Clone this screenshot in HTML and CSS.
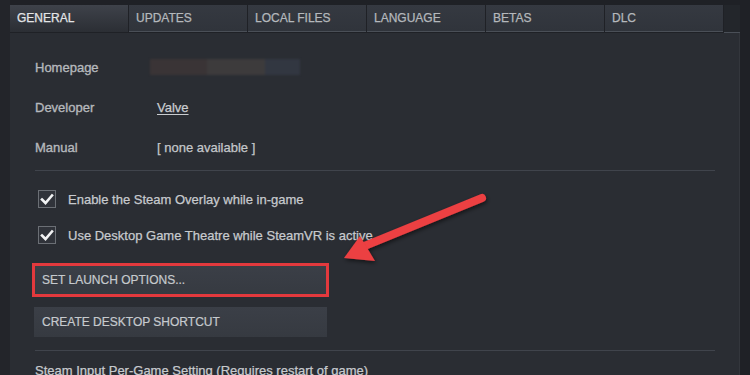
FILE: index.html
```html
<!DOCTYPE html>
<html>
<head>
<meta charset="utf-8">
<link rel="stylesheet" href="styles.css">
</head>
<body>
<div class="window">
  <div class="tabs">
    <div class="tab active">GENERAL</div>
    <div class="tab">UPDATES</div>
    <div class="tab">LOCAL FILES</div>
    <div class="tab">LANGUAGE</div>
    <div class="tab">BETAS</div>
    <div class="tab">DLC</div>
    <div class="tab-fill"></div>
  </div>
  <div class="panel">
    <div class="info">
      <div class="row"><span class="label">Homepage</span><span class="blur"><i class="b1"></i><i class="b2"></i><i class="b3"></i></span></div>
      <div class="row"><span class="label">Developer</span><span class="value link">Valve</span></div>
      <div class="row"><span class="label">Manual</span><span class="value">[ none available ]</span></div>
    </div>
    <div class="sep"></div>
    <div class="checks">
      <div class="check"><span class="box"><svg viewBox="0 0 18 18" width="18" height="18"><path d="M4 9.5 L7.5 13 L14 5.5" fill="none" stroke="#f2f3f4" stroke-width="2.6" stroke-linecap="square"/></svg></span><span class="ctext">Enable the Steam Overlay while in-game</span></div>
      <div class="check"><span class="box"><svg viewBox="0 0 18 18" width="18" height="18"><path d="M4 9.5 L7.5 13 L14 5.5" fill="none" stroke="#f2f3f4" stroke-width="2.6" stroke-linecap="square"/></svg></span><span class="ctext">Use Desktop Game Theatre while SteamVR is active</span></div>
    </div>
    <div class="buttons">
      <div class="btn highlighted">SET LAUNCH OPTIONS...</div>
      <div class="btn">CREATE DESKTOP SHORTCUT</div>
    </div>
    <div class="sep sep2"></div>
    <div class="footer-text">Steam Input Per-Game Setting (Requires restart of game)</div>
  </div>
  <svg class="arrow" width="750" height="375" viewBox="0 0 750 375">
    <defs>
      <filter id="sh" x="-20%" y="-20%" width="140%" height="140%">
        <feDropShadow dx="1" dy="2" stdDeviation="2" flood-color="#000" flood-opacity="0.55"/>
      </filter>
    </defs>
    <g filter="url(#sh)">
      <line x1="482" y1="198" x2="362" y2="247" stroke="#ec3f42" stroke-width="8" stroke-linecap="round"/>
      <polygon points="344,258 360,236 375,261" fill="#ec3f42"/>
    </g>
  </svg>
</div>
</body>
</html>
```

FILE: styles.css
```css
html, body {
  margin: 0;
  padding: 0;
}
body {
  background: #1f2126;
  font-family: "Liberation Sans", Arial, sans-serif;
  width: 750px;
  height: 375px;
  overflow: hidden;
}
.window {
  position: relative;
  padding-top: 5px;
  height: 370px;
  background: linear-gradient(to right, #23252a 0, #23252a 10px, transparent 10px), #1f2126;
}
.tabs {
  display: flex;
  margin-left: 10px;
  width: 730px;
  height: 28px;
}
.tab {
  width: 118px;
  height: 27px;
  margin-right: 1px;
  line-height: 27px;
  padding-left: 7px;
  box-sizing: border-box;
  font-size: 12px;
  color: #b4b8bc;
  -webkit-text-stroke: 0.25px currentColor;
  background: linear-gradient(to bottom, #353941, #30343b);
  border-bottom: 1px solid #4a4f57;
}
.tab.active {
  color: #e3e5e7;
  background: linear-gradient(to bottom, #3e424a, #2c2f35);
  border-bottom: 1px solid #2c2f35;
}
.tab-fill {
  flex: 1;
  border-bottom: 1px solid #4a4f57;
  background: #23262b;
}
.panel {
  margin-left: 10px;
  width: 730px;
  height: 342px;
  background: #2a2d33;
  padding: 14px 0 0 25px;
  box-sizing: border-box;
  border-right: 1px solid #33363c;
}
.row {
  display: flex;
  align-items: center;
  height: 40px;
  font-size: 13px;
}
.label {
  width: 122px;
  color: #b5b8bc;
  -webkit-text-stroke: 0.35px currentColor;
}
.value {
  color: #c4c7ca;
  -webkit-text-stroke: 0.25px currentColor;
}
.link {
  text-decoration: underline;
  text-underline-offset: 2px;
  color: #c9ccd0;
}
.blur {
  display: flex;
  margin-left: -7px;
  height: 16px;
  filter: blur(1px);
}
.blur i { display: block; height: 16px; }
.b1 { width: 57px; background: #3a3436; }
.b2 { width: 58px; background: #3d3b3c; }
.b3 { width: 35px; background: #323741; }
.sep {
  width: 680px;
  height: 1px;
  background: #40444c;
  margin-top: 3px;
}
.checks {
  margin-top: 10px;
}
.check {
  display: flex;
  align-items: center;
  height: 36px;
}
.box {
  margin-left: 3px;
  width: 18px;
  height: 18px;
  box-sizing: border-box;
  border: 1px solid #6b6f75;
  background: #30333a;
  display: flex;
  align-items: center;
  justify-content: center;
}
.box svg { display: block; margin: -1px; }
.ctext {
  margin-left: 12px;
  font-size: 13px;
  color: #c7cace;
  -webkit-text-stroke: 0.25px currentColor;
}
.buttons {
  margin-top: 12px;
  margin-left: -1px;
  display: flex;
  flex-direction: column;
  gap: 12px;
}
.btn {
  width: 293px;
  height: 30px;
  line-height: 30px;
  padding-left: 8px;
  box-sizing: border-box;
  font-size: 12px;
  color: #c6cace;
  -webkit-text-stroke: 0.2px currentColor;
  background: linear-gradient(to bottom, #3b3f47, #363a41);
}
.btn.highlighted {
  outline: 3px solid #e3393d;
  outline-offset: -1px;
}
.sep2 {
  margin-top: 13px;
}
.footer-text {
  margin-top: 12px;
  font-size: 13px;
  color: #c7cace;
  -webkit-text-stroke: 0.25px currentColor;
}
.arrow {
  position: absolute;
  left: 0;
  top: 0;
  pointer-events: none;
}
```
